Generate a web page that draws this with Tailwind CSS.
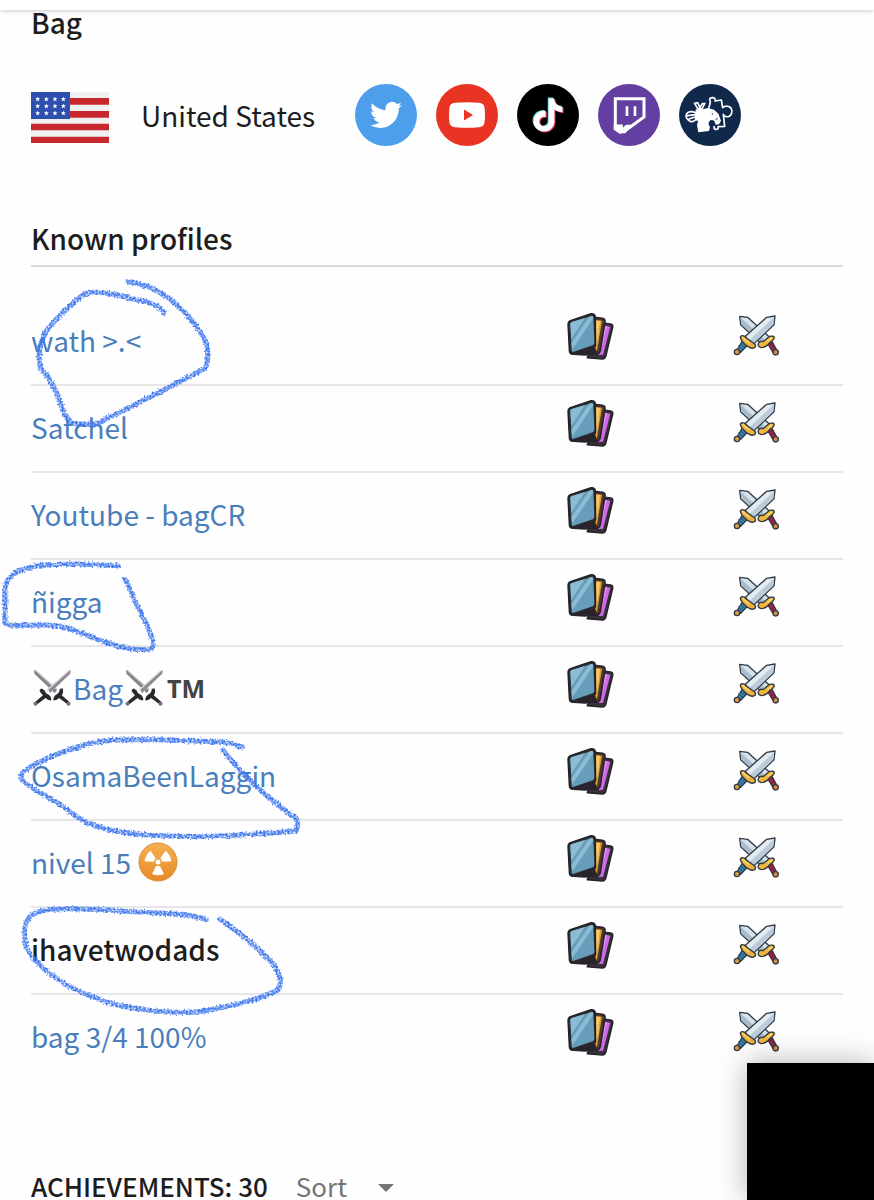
<!DOCTYPE html>
<html lang="en">
<head>
  <meta charset="UTF-8" />
  <meta name="viewport" content="width=device-width, initial-scale=1.0"/>
  <title>Bag - Player profile</title>

  <!-- Tailwind CSS -->
  <script src="https://cdn.jsdelivr.net/npm/@tailwindcss/browser@4"></script>
</head>
<body class="relative min-h-screen overflow-x-hidden bg-[#fefefe] font-['Noto_Sans_CJK_SC','Noto_Sans',sans-serif] text-[28px] leading-8 text-[#1d1d1d]">

  <!-- Shared icons -->
  <svg class="absolute h-0 w-0" aria-hidden="true">
    <symbol id="cards" viewBox="45 30 150 150">
      <path d="M158 66L182 69Q189 70 188 78L168 162Q166 173 157 174L112 170Z" fill="#39313a" stroke="#29242b" stroke-width="5" stroke-linejoin="round"/>
      <path d="M164 74L181 77L159 162L124 160Z" fill="#cf68eb"/>
      <path d="M164 76L171 74L150 161L140 160Z" fill="#e595f5"/>
      <path d="M133 49L157 52Q166 54 165 62L151 148Q149 158 142 160L105 158Z" fill="#4c3a2c" stroke="#29242b" stroke-width="5" stroke-linejoin="round"/>
      <path d="M137 57L156 59L141 149L122 149Z" fill="#e59b3b"/>
      <path d="M139 59L150 60L141 128L130 135Z" fill="#f7cb62"/>
      <path d="M61 59L123 38Q135 37 136 47L137 126Q138 136 132 141L67 160Q58 158 58 149L54 71Q54 62 61 59Z" fill="#2d2b30" stroke="#1e2024" stroke-width="4"/>
      <path d="M61 69Q61 65 66 63L125 45Q130 45 130 50L133 126Q133 130 128 133L69 153Q65 153 65 148Z" fill="#659dbb"/>
      <path d="M61 69Q61 65 66 63L105 51L64 113ZM64 127L118 47L125 45Q130 45 130 52L67 145Z" fill="#8bbcd3"/>
      <path d="M69 156L134 135L142 160L105 164L70 162Z" fill="#29242b"/>
    </symbol>
    <symbol id="battle" viewBox="48 30 150 150">
      <g stroke="#303a48" stroke-width="4" stroke-linejoin="round">
        <path d="M74 46L98 49L163 108L143 132L77 71Z" fill="#d5e2ea"/>
        <path d="M77 50L153 119L143 130L79 70Z" fill="#a9bccb" stroke="none"/>
        <path d="M157 126L169 118L184 145L173 153Z" fill="#9d2648"/>
        <path d="M131 126Q136 118 144 122L164 106Q177 103 178 111Q174 120 166 123Q153 140 138 140Q130 138 129 131Z" fill="#efb83c"/>
        <circle cx="182" cy="154" r="8" fill="#d68b42"/>
        <path d="M180 45L155 49L91 106L112 133L177 71Z" fill="#e1ebf0"/>
        <path d="M177 49L101 119L112 130L174 71Z" fill="#bacbd9" stroke="none"/>
        <path d="M82 120L98 132L77 154L66 147Z" fill="#3d82aa"/>
        <path d="M80 104Q88 103 93 110L115 126Q124 131 121 138Q114 145 103 139Q92 134 86 126Q76 115 76 108Z" fill="#eeb13c"/>
        <circle cx="66" cy="153" r="8" fill="#d9a148"/>
      </g>
      <path d="M75 127L89 139M70 134L84 146" stroke="#27516f" stroke-width="3"/>
      <path d="M160 133L175 126M165 142L179 134" stroke="#6a203d" stroke-width="3"/>
      <path d="M83 109Q92 118 103 126M158 121L170 111" stroke="#ffdc70" stroke-width="4"/>
    </symbol>
    <symbol id="swords" viewBox="98 362 112 110">
      <path d="M101 364L107 366L171 422L162 433L102 376Z" fill="#c9c6cb"/>
      <path d="M101 365L168 425L162 433L102 376Z" fill="#87818a"/>
      <path d="M209 364L203 366L139 422L148 433L208 376Z" fill="#d9d7da"/>
      <path d="M209 365L144 424L148 433L208 376Z" fill="#8f8991"/>
      <path d="M158 454Q158 443 167 438Q177 434 177 421L186 420Q189 433 183 440L206 460L200 467L175 448Q169 455 160 456Z" fill="#29282d"/>
      <path d="M152 454Q152 443 143 438Q133 434 133 427L124 420Q116 423 117 427Q120 434 127 440L104 460L110 467L135 448Q141 455 150 456Z" fill="#29282d"/>
      <circle cx="105" cy="465" r="6" fill="#77717a"/>
      <circle cx="203" cy="465" r="6" fill="#77717a"/>
    </symbol>
    <symbol id="star" viewBox="0 0 24 24">
      <path d="M12 1l3 8h8l-6 5 2 9-7-5-7 5 2-9-6-5h8z" fill="#fff"/>
    </symbol>
  </svg>

  <header class="absolute inset-x-0 top-0 h-[10px] bg-white shadow-[0_1px_4px_rgba(0,0,0,0.2)]"></header>

  <main class="px-[31px] pt-[6px]">
    <h1 class="font-medium">Bag</h1>

    <!-- Country and social links -->
    <section class="mt-[46px] flex items-center gap-10">
      <div class="flex items-center gap-8">
        <svg class="mt-1 h-[51px] w-[78px] shrink-0" viewBox="93 276 234 153" role="img" aria-label="Flag of the United States">
          <path d="M93 276h234v153H93z" fill="#f0f0f0"/>
          <path d="M93 294h234v20H93zM93 333h234v20H93zM93 371h234v20H93zM93 410h234v19H93z" fill="#c7282e"/>
          <path d="M93 276h117v81H93z" fill="#2f4fae"/>
          <use href="#star" x="105" y="289" width="16" height="16"/><use href="#star" x="131" y="289" width="16" height="16"/><use href="#star" x="157" y="289" width="16" height="16"/><use href="#star" x="182" y="289" width="16" height="16"/>
          <use href="#star" x="105" y="310" width="16" height="16"/><use href="#star" x="131" y="310" width="16" height="16"/><use href="#star" x="157" y="310" width="16" height="16"/><use href="#star" x="182" y="310" width="16" height="16"/>
          <use href="#star" x="105" y="331" width="16" height="16"/><use href="#star" x="131" y="331" width="16" height="16"/><use href="#star" x="157" y="331" width="16" height="16"/><use href="#star" x="182" y="331" width="16" height="16"/>
        </svg>
        <span class="whitespace-nowrap">United States</span>
      </div>
      <nav class="flex gap-[19px]">
        <a href="#" aria-label="Twitter" class="flex size-[62px] items-center justify-center rounded-full bg-[#4d9eeb]">
          <svg class="size-8" viewBox="0 0 24 24" fill="#fff"><path d="M23.953 4.57a10 10 0 01-2.825.775 4.958 4.958 0 002.163-2.723c-.951.555-2.005.959-3.127 1.184a4.92 4.92 0 00-8.384 4.482C7.69 8.095 4.067 6.13 1.64 3.162a4.822 4.822 0 00-.666 2.475c0 1.71.87 3.213 2.188 4.096a4.904 4.904 0 01-2.228-.616v.06a4.923 4.923 0 003.946 4.827 4.996 4.996 0 01-2.212.085 4.936 4.936 0 004.604 3.417 9.867 9.867 0 01-6.102 2.105c-.39 0-.779-.023-1.17-.067a13.995 13.995 0 007.557 2.209c9.053 0 13.998-7.496 13.998-13.985 0-.21 0-.42-.015-.63A9.935 9.935 0 0024 4.59z"/></svg>
        </a>
        <a href="#" aria-label="YouTube" class="flex size-[62px] items-center justify-center rounded-full bg-[#e93323]">
          <svg class="h-[26px] w-9" viewBox="0 0 36 26"><path d="M6 .8Q18-.5 30 .8Q35 1.200 35.500 5.500Q36.500 13 35.500 20.500Q35 24.800 30 25.200Q18 26.500 6 25.200Q1 24.800.5 20.500Q-.5 13 .5 5.500Q1 1.200 6 .8Z" fill="#fff"/><path d="M15 7.500v11l9-5.500z" fill="#e93323"/></svg>
        </a>
        <a href="#" aria-label="TikTok" class="flex size-[62px] items-center justify-center rounded-full bg-black">
          <svg class="h-9 w-9" viewBox="-1 -1 26 26">
            <defs><path id="note" d="M12.525.02c1.310-.02 2.610-.01 3.910-.02.080 1.530.630 3.090 1.750 4.170 1.120 1.110 2.700 1.620 4.240 1.790v4.030c-1.440-.05-2.890-.35-4.200-.97-.57-.26-1.100-.59-1.620-.93-.01 2.920.010 5.840-.02 8.750-.08 1.400-.54 2.790-1.350 3.940-1.310 1.920-3.580 3.170-5.910 3.210-1.430.080-2.860-.31-4.080-1.030-2.020-1.190-3.440-3.370-3.650-5.710-.02-.5-.03-1-.01-1.490.180-1.900 1.120-3.720 2.580-4.960 1.660-1.440 3.980-2.130 6.150-1.720.020 1.480-.04 2.960-.04 4.440-.99-.32-2.150-.23-3.020.370-.63.410-1.110 1.040-1.360 1.750-.21.510-.15 1.070-.14 1.610.240 1.640 1.820 3.020 3.500 2.870 1.120-.01 2.190-.66 2.770-1.610.190-.33.400-.67.410-1.060.100-1.790.060-3.570.070-5.360.010-4.030-.01-8.050.020-12.070z"/></defs>
            <use href="#note" x="-.7" y="-.6" fill="#69d5d5"/><use href="#note" x=".8" y=".6" fill="#e5395c"/><use href="#note" fill="#fff"/>
          </svg>
        </a>
        <a href="#" aria-label="Twitch" class="flex size-[62px] items-center justify-center rounded-full bg-[#623fa0]">
          <svg class="size-[62px]" viewBox="156 27 186 186"><path d="M208 71H294V126L257 153L235 169L226 166V153H208Z" fill="none" stroke="#fff" stroke-width="9"/><path d="M203 151H224V164L240 149H258L238 175H228L222 177L203 164Z" fill="#fff"/><path d="M239 94h8v29h-8zM263 94h8v29h-8z" fill="#fff"/></svg>
        </a>
        <a href="#" aria-label="Community" class="flex size-[62px] items-center justify-center rounded-full bg-[#10294a]">
          <svg class="size-[62px]" viewBox="399 27 186 186">
            <path d="M487 103L491 90L493 79Q487 69 499 68Q510 68 507 78L526 75L530 98Q538 91 550 95Q560 101 557 114Q553 127 541 125Q533 123 532 118L536 154L516 155Q520 164 508 163Q502 160 505 153" fill="none" stroke="#fff" stroke-width="5" stroke-linejoin="round"/>
            <path d="M449 104L462 99L471 103L486 99L504 104L517 116L525 137L519 148L509 149L505 138Q496 132 490 139Q485 147 492 156L489 168L457 172L453 151L456 138L446 134Z" fill="#fff"/>
            <path d="M446 85L455 83L463 100L455 101ZM469 86L476 86L467 104L460 101ZM450 113Q428 105 422 116Q416 130 432 139Q442 142 453 132M425 122L448 119M429 132L449 125" fill="none" stroke="#fff" stroke-width="5" stroke-linecap="round"/>
            <circle cx="499" cy="117" r="2" fill="#10294a"/><path d="M509 133l6-2" stroke="#10294a" stroke-width="3"/>
          </svg>
        </a>
      </nav>
    </section>

    <!-- Profiles -->
    <h2 id="profiles" class="mt-[76px] border-b-2 border-[#dadada] pb-[11px] font-medium">Known profiles</h2>
    <table aria-labelledby="profiles" class="mt-8 w-full table-fixed border-separate border-spacing-0 text-[#4a7ebb] [&_td]:border-b-2 [&_td]:border-[#e6e6e6] [&_td]:p-0 [&_td]:pb-3 [&_td:first-child]:pb-1 [&_td+td]:pl-[58px] [&_tr]:h-[87px] [&_tr:last-child_td]:border-transparent [&_td+td_svg]:size-[50px]">
      <colgroup><col/><col class="w-[166px]"/><col class="w-[170px]"/></colgroup>
      <tbody>
        <tr>
          <td><a href="#">wath &gt;.&lt;</a></td>
          <td><a href="#" aria-label="Cards"><svg><use href="#cards"/></svg></a></td>
          <td><a href="#" aria-label="Battles"><svg><use href="#battle"/></svg></a></td>
        </tr>
        <tr>
          <td><a href="#">Satchel</a></td>
          <td><a href="#" aria-label="Cards"><svg><use href="#cards"/></svg></a></td>
          <td><a href="#" aria-label="Battles"><svg><use href="#battle"/></svg></a></td>
        </tr>
        <tr>
          <td><a href="#">Youtube - bagCR</a></td>
          <td><a href="#" aria-label="Cards"><svg><use href="#cards"/></svg></a></td>
          <td><a href="#" aria-label="Battles"><svg><use href="#battle"/></svg></a></td>
        </tr>
        <tr>
          <td><a href="#">ñigga</a></td>
          <td><a href="#" aria-label="Cards"><svg><use href="#cards"/></svg></a></td>
          <td><a href="#" aria-label="Battles"><svg><use href="#battle"/></svg></a></td>
        </tr>
        <tr>
          <td>
            <a href="#" class="flex items-center gap-[2px] pl-[2px]">
              <svg class="h-[37px] w-[38px]"><use href="#swords"/></svg>
              <span>Bag</span>
              <svg class="h-[37px] w-[38px]"><use href="#swords"/></svg>
              <span class="pl-[2px] font-['Open_Sans',sans-serif] text-[25px] font-bold text-[#444]">TM</span>
            </a>
          </td>
          <td><a href="#" aria-label="Cards"><svg><use href="#cards"/></svg></a></td>
          <td><a href="#" aria-label="Battles"><svg><use href="#battle"/></svg></a></td>
        </tr>
        <tr>
          <td><a href="#">OsamaBeenLaggin</a></td>
          <td><a href="#" aria-label="Cards"><svg><use href="#cards"/></svg></a></td>
          <td><a href="#" aria-label="Battles"><svg><use href="#battle"/></svg></a></td>
        </tr>
        <tr>
          <td>
            <a href="#" class="flex items-center gap-[7px]">
              <span>nivel 15</span>
              <svg class="size-[40px]" viewBox="-20 -20 40 40">
                <defs><linearGradient id="amber" x1="0" y1="0" x2="0" y2="1"><stop stop-color="#f5b052"/><stop offset="1" stop-color="#e88a25"/></linearGradient></defs>
                <circle r="19" fill="url(#amber)" stroke="#d98a35" stroke-width="1"/>
                <g fill="#fff"><circle r="2.500"/><path id="blade" d="M-2 4h4l4 8q-6 2.500-12 0z"/><use href="#blade" transform="rotate(120)"/><use href="#blade" transform="rotate(240)"/></g>
              </svg>
            </a>
          </td>
          <td><a href="#" aria-label="Cards"><svg><use href="#cards"/></svg></a></td>
          <td><a href="#" aria-label="Battles"><svg><use href="#battle"/></svg></a></td>
        </tr>
        <tr>
          <td class="font-medium text-[#1d1d1d]">ihavetwodads</td>
          <td><a href="#" aria-label="Cards"><svg><use href="#cards"/></svg></a></td>
          <td><a href="#" aria-label="Battles"><svg><use href="#battle"/></svg></a></td>
        </tr>
        <tr>
          <td><a href="#">bag 3/4 100%</a></td>
          <td><a href="#" aria-label="Cards"><svg><use href="#cards"/></svg></a></td>
          <td><a href="#" aria-label="Battles"><svg><use href="#battle"/></svg></a></td>
        </tr>
      </tbody>
    </table>

    <!-- Achievements -->
    <section class="mt-[90px] flex items-center gap-7 text-[26px] leading-7">
      <h2 class="font-medium">ACHIEVEMENTS: 30</h2>
      <div class="relative text-[#757575]">
        <select aria-label="Sort achievements" class="block h-7 w-[98px] appearance-none bg-transparent leading-7">
          <option>Sort</option>
        </select>
        <svg class="pointer-events-none absolute top-3 right-0 h-2 w-4" viewBox="0 0 16 8"><path d="M0 0h16L8 8z" fill="#757575"/></svg>
      </div>
    </section>
  </main>

  <!-- Crayon marks -->
  <svg class="pointer-events-none absolute top-0 left-0 h-[1100px] w-[400px]" viewBox="0 0 400 1100" fill="none" stroke="#3f78ee" stroke-width="5" stroke-linecap="round" stroke-linejoin="round" aria-hidden="true">
    <filter id="crayon" filterUnits="userSpaceOnUse" x="0" y="0" width="400" height="1100" color-interpolation-filters="sRGB">
      <feTurbulence type="fractalNoise" baseFrequency="0.5" numOctaves="2" seed="4" result="noise"/>
      <feDisplacementMap in="SourceGraphic" in2="noise" scale="5" xChannelSelector="R" yChannelSelector="G" result="rough"/>
      <feColorMatrix in="noise" values="0 0 0 0 0  0 0 0 0 0  0 0 0 0 0  0 0 2 0 -0.25" result="grain"/>
      <feComposite in="rough" in2="grain" operator="in"/>
      <feGaussianBlur stdDeviation="0.4"/>
    </filter>
    <g filter="url(#crayon)">
      <path d="M164 313C158 303 145 302 130 298S95 290 84 294C70 305 48 325 43 338C38 350 38 365 42 370C52 380 58 395 62 408C66 418 70 424 80 424C92 425 100 424 110 417C140 402 175 385 205 368C209 362 208 350 206 342C195 320 165 285 128 282"/>
      <path d="M118 566C95 564 60 563 35 566C18 570 5 576 5 590V622C5 627 20 625 45 625C75 625 90 640 125 648C140 650 150 650 152 648C156 640 145 622 138 607L125 579"/>
      <path d="M242 747C225 739 200 742 170 740C130 740 105 738 85 745C60 752 20 768 21 777C25 788 50 795 70 812C95 832 130 834 165 836C210 838 260 834 296 831C300 822 297 818 290 814C275 803 245 780 223 750"/>
      <path d="M206 920C190 912 150 914 110 910C80 909 50 906 33 914C22 922 24 935 26 947C35 965 60 985 95 998C125 1010 180 1016 210 1010C235 1005 265 997 278 990C284 980 278 966 262 953C250 940 235 930 220 919"/>
    </g>
  </svg>

  <!-- Floating panel -->
  <aside class="fixed right-0 bottom-0 h-[137px] w-[127px] bg-black shadow-[0_0_28px_rgba(0,0,0,0.3)]"></aside>

</body>
</html>
